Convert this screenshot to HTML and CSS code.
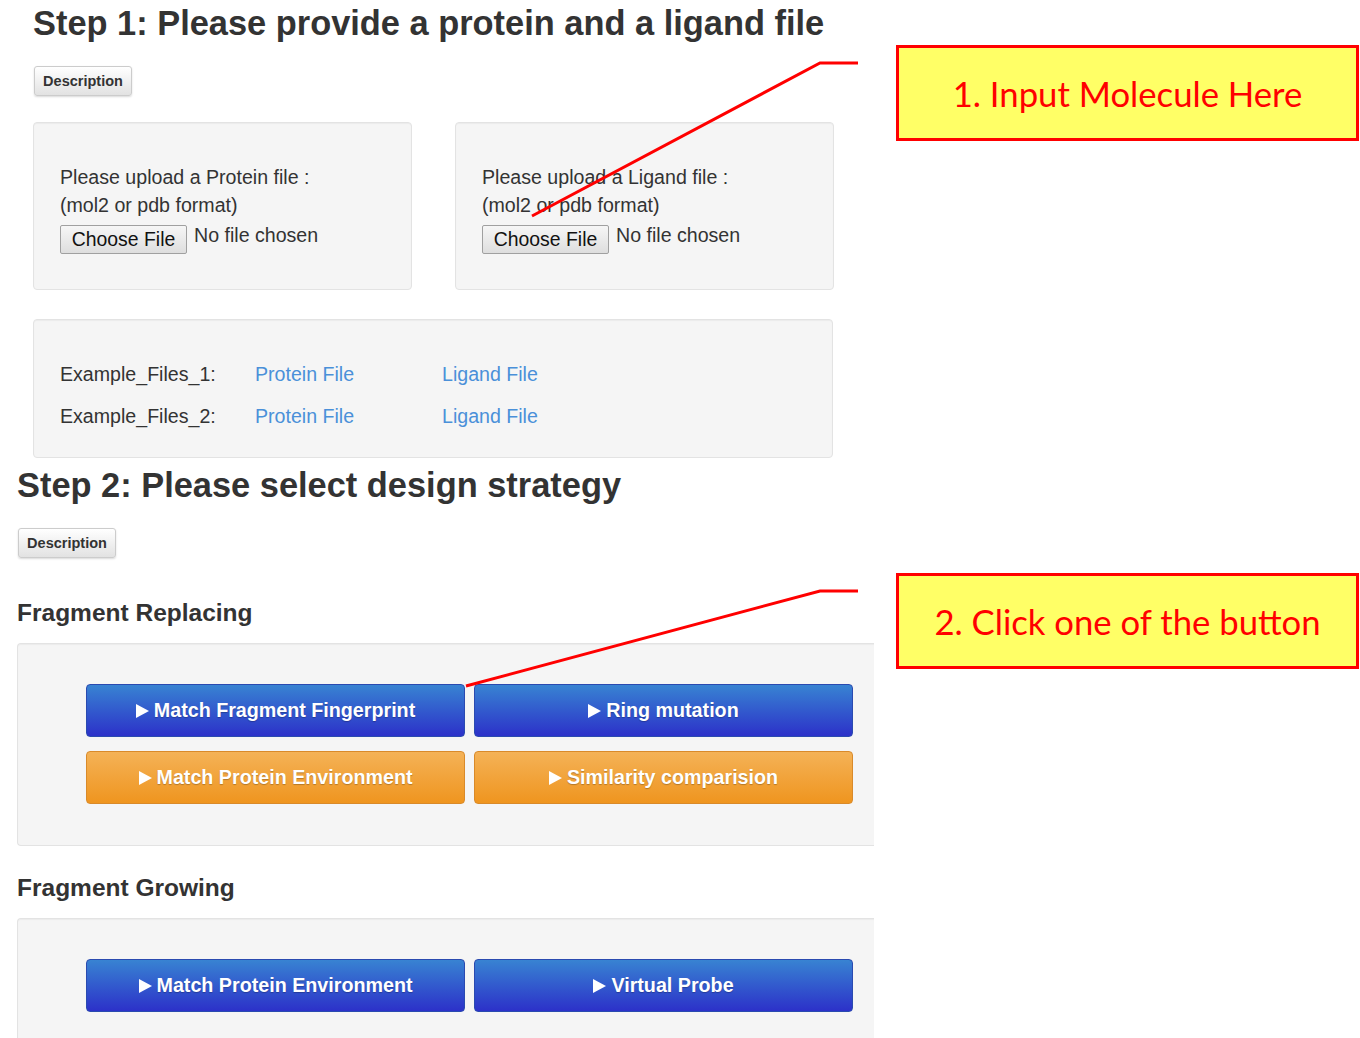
FILE: index.html
```html
<!DOCTYPE html>
<html>
<head>
<meta charset="utf-8">
<link rel="stylesheet" href="styles.css">
</head>
<body>
<div class="page">
  <section class="step1">
    <h1 class="step-title">Step 1: Please provide a protein and a ligand file</h1>
    <button class="desc-btn">Description</button>
    <div class="upload-row">
      <div class="well upload">
        <div class="line">Please upload a Protein file :</div>
        <div class="line">(mol2 or pdb format)</div>
        <div class="file-line"><span class="choose">Choose File</span><span class="nofile">No file chosen</span></div>
      </div>
      <div class="well upload">
        <div class="line">Please upload a Ligand file :</div>
        <div class="line">(mol2 or pdb format)</div>
        <div class="file-line"><span class="choose">Choose File</span><span class="nofile">No file chosen</span></div>
      </div>
    </div>
    <div class="well examples">
      <div class="ex-row"><span class="ex-label">Example_Files_1:</span><a class="ex-link">Protein File</a><a class="ex-link">Ligand File</a></div>
      <div class="ex-row"><span class="ex-label">Example_Files_2:</span><a class="ex-link">Protein File</a><a class="ex-link">Ligand File</a></div>
    </div>
  </section>
  <section class="step2">
    <h1 class="step-title t2">Step 2: Please select design strategy</h1>
    <button class="desc-btn">Description</button>
    <h2 class="sub">Fragment Replacing</h2>
    <div class="well strat">
      <div class="btn-grid">
        <button class="act blue"><span class="tri"></span>Match Fragment Fingerprint</button>
        <button class="act blue"><span class="tri"></span>Ring mutation</button>
        <button class="act orange"><span class="tri"></span>Match Protein Environment</button>
        <button class="act orange"><span class="tri"></span>Similarity comparision</button>
      </div>
    </div>
    <h2 class="sub g2">Fragment Growing</h2>
    <div class="well strat last">
      <div class="btn-grid">
        <button class="act blue"><span class="tri"></span>Match Protein Environment</button>
        <button class="act blue"><span class="tri"></span>Virtual Probe</button>
      </div>
    </div>
  </section>
</div>

<div class="note note1">1. Input Molecule Here</div>
<div class="note note2">2. Click one of the button</div>
<svg class="lines" width="1360" height="1038" viewBox="0 0 1360 1038">
  <polyline points="532,216 820,63 858,63" fill="none" stroke="#ff0000" stroke-width="3"/>
  <polyline points="466,686 820,591 858,591" fill="none" stroke="#ff0000" stroke-width="3"/>
</svg>
</body>
</html>
```

FILE: styles.css
```css
html, body {
  margin: 0;
  padding: 0;
  background: #ffffff;
}
body {
  width: 1360px;
  height: 1038px;
  overflow: hidden;
  position: relative;
  font-family: "Liberation Sans", Arial, sans-serif;
  color: #333333;
}
.page {
  width: 874px;
  height: 1038px;
  overflow: hidden;
}
.step1 {
  padding-left: 33px;
  padding-top: 1px;
}
.step-title {
  margin: 0;
  font-size: 34.4px;
  line-height: 44px;
  font-weight: bold;
  color: #333333;
  white-space: nowrap;
}
.desc-btn {
  display: block;
  margin: 21px 0 0 1px;
  width: 98px;
  height: 30px;
  padding: 0;
  font-family: "Liberation Sans", Arial, sans-serif;
  font-size: 14.5px;
  font-weight: bold;
  color: #333333;
  background: linear-gradient(#ffffff, #e2e2e2);
  border: 1px solid #cccccc;
  border-radius: 3px;
  box-shadow: 0 1px 2px rgba(0,0,0,0.15);
}
.well {
  background: #f5f5f5;
  border: 1px solid #e3e3e3;
  border-radius: 4px;
  box-shadow: inset 0 1px 1px rgba(0,0,0,0.04);
  box-sizing: border-box;
}
.upload-row {
  display: flex;
  gap: 43px;
  margin-top: 26px;
}
.upload {
  width: 379px;
  height: 168px;
  padding: 40px 0 0 26px;
  font-size: 19.6px;
}
.line {
  line-height: 28px;
}
.file-line {
  display: flex;
  align-items: flex-start;
  margin-top: 6px;
}
.choose {
  display: inline-block;
  width: 127px;
  height: 29px;
  box-sizing: border-box;
  border: 1px solid #a0a0a0;
  border-radius: 2px;
  background: linear-gradient(#f6f6f6, #dedede);
  color: #111111;
  font-size: 19.4px;
  line-height: 27px;
  text-align: center;
}
.nofile {
  margin-left: 7px;
  line-height: 20px;
  font-size: 19.6px;
}
.examples {
  width: 800px;
  height: 139px;
  margin-top: 29px;
  padding: 33px 0 0 26px;
  font-size: 19.6px;
}
.ex-row {
  display: flex;
  height: 42px;
  align-items: center;
}
.ex-label {
  width: 195px;
}
.ex-link {
  width: 187px;
  color: #4a90d9;
  text-decoration: none;
}
.step2 {
  padding-left: 17px;
  margin-top: 5px;
}
.t2 {
  margin: 0;
}
.sub {
  margin: 40px 0 0 0;
  font-size: 24.5px;
  line-height: 30px;
  font-weight: bold;
  color: #333333;
}
.sub.g2 {
  margin-top: 27px;
}
.strat {
  width: 880px;
  margin-top: 15px;
  padding: 40px 0 41px 68px;
  border-right: none;
  border-radius: 4px 0 0 4px;
}
.strat.last {
  height: 200px;
}
.btn-grid {
  display: grid;
  grid-template-columns: 379px 379px;
  column-gap: 9px;
  row-gap: 14px;
}
.act {
  height: 53px;
  padding: 0;
  display: flex;
  align-items: center;
  justify-content: center;
  font-family: "Liberation Sans", Arial, sans-serif;
  font-size: 19.7px;
  font-weight: bold;
  color: #ffffff;
  border-radius: 4px;
  text-shadow: 0 1px 1px rgba(0,0,0,0.25);
}
.act.blue {
  background: linear-gradient(#3883d2, #2c31c9);
  border: 1px solid #2a4ab0;
}
.act.orange {
  background: linear-gradient(#f4b257, #ef951f);
  border: 1px solid #d98a2a;
}
.tri {
  width: 0;
  height: 0;
  border-top: 7px solid transparent;
  border-bottom: 7px solid transparent;
  border-left: 13px solid #ffffff;
  margin-right: 5px;
  margin-top: 1px;
}
.note {
  position: absolute;
  left: 896px;
  width: 463px;
  height: 96px;
  box-sizing: border-box;
  border: 3px solid #ff0000;
  background: #ffff66;
  color: #ff0000;
  font-family: Lato, "Open Sans", sans-serif;
  font-size: 34.7px;
  display: flex;
  align-items: center;
  justify-content: center;
}
.note1 { top: 45px; }
.note2 { top: 573px; }
.lines {
  position: absolute;
  left: 0;
  top: 0;
  pointer-events: none;
}
```
